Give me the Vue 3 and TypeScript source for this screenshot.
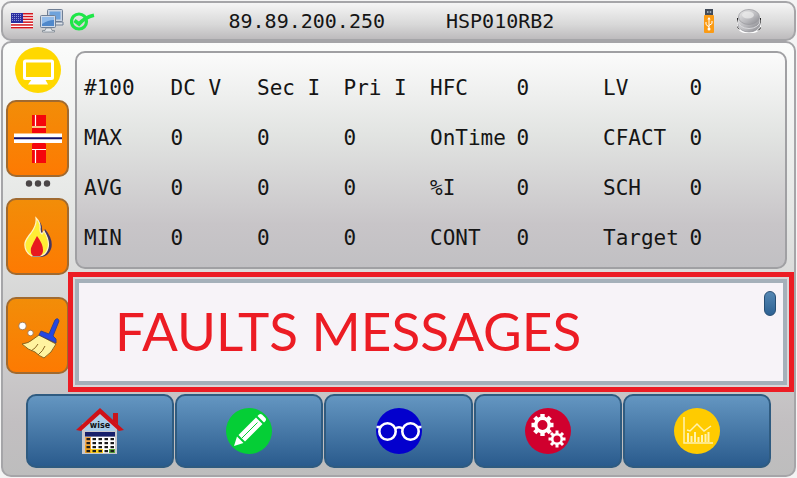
<script setup lang="ts">
interface StatRow {
  name: string
  cells: string[]
}

const address = '89.89.200.250'
const device = 'HSP010RB2'

const heading: string[] = ['#100', 'DC V', 'Sec I', 'Pri I', 'HFC', '0', 'LV', '0']
const rows: StatRow[] = [
  { name: 'MAX', cells: ['0', '0', '0', 'OnTime', '0', 'CFACT', '0'] },
  { name: 'AVG', cells: ['0', '0', '0', '%I', '0', 'SCH', '0'] },
  { name: 'MIN', cells: ['0', '0', '0', 'CONT', '0', 'Target', '0'] },
]

const stripes: number[] = [0, 1, 2, 3, 4, 5]
const calendarRows: number[] = [0, 1, 2, 3]
const calendarCols: number[] = [0, 1, 2, 3, 4]
const teeth: number[] = [0, 45, 90, 135, 180, 225, 270, 315]

function dayColor(row: number, col: number): string {
  if (col === 0) return row < 2 ? '#f5a94e' : '#f0a020'
  if (row === 3) return col === 4 ? '#5fae3c' : col < 3 ? '#ffd21c' : '#fff'
  return '#fff'
}
</script>

<template>
  <div class="screen">
    <header class="status">
      <div class="status-icons">
        <svg class="flag" viewBox="0 0 22 16" aria-label="English (US)">
          <rect width="22" height="16" fill="#fff" />
          <rect v-for="s in stripes" :key="s" x="0" :y="s * 2.8" width="22" height="1.5" fill="#d3151c" />
          <rect width="12" height="10" fill="#2b2fa0" />
          <path d="M1 1.5h10M1 3.5h10M1 5.5h10M1 7.5h10" stroke="#aab0e6" stroke-width=".8" stroke-dasharray="1 1" />
        </svg>
        <svg class="network" viewBox="0 0 25 24" aria-label="Network">
          <g stroke="#6f7f95" stroke-width="1">
            <rect x="8.500" y=".5" width="15" height="12" rx="1" fill="#c9d3e2" />
            <rect x="10.500" y="2.500" width="11" height="8" fill="#6fa3dc" stroke="none" />
            <path d="M13 16h11v-3h-9z" fill="#dfe3e8" />
            <rect x="1.500" y="6.500" width="15" height="12" rx="1" fill="#d2dbe8" />
          </g>
          <rect x="3" y="8" width="12" height="9" fill="#4f88cb" />
          <path d="M3 8h12v3Q9 11 3 15z" fill="#91bbea" />
          <path d="M7 19h5l1 2.500h2.500v1.500h-12v-1.500H6z" fill="#e3e6ea" stroke="#707b88" stroke-width=".7" />
        </svg>
        <svg class="check" viewBox="0 0 25 20" aria-label="Connected">
          <circle cx="9" cy="10.500" r="7.500" fill="none" stroke="#1fe648" stroke-width="3.200" />
          <path d="M4.500 9.500l4.500 3.500q6-7 15-8.800" fill="none" stroke="#1fe648" stroke-width="3.600" />
        </svg>
      </div>
      <span>{{ address }}</span>
      <span>{{ device }}</span>
      <div class="drives">
        <svg class="usb" viewBox="0 0 10 24" aria-label="USB drive">
          <rect x="1" width="8" height="7" fill="#414b59" />
          <path d="M3 2h1.500v2H3zM5.700 2h1.500v2H5.700z" fill="#9aa6b4" />
          <rect y="6" width="10" height="18" rx="1" fill="#fb9b14" />
          <path d="M5 20V9M5 18L2 15.500V13M5 16.500L8 14.500V12" fill="none" stroke="#fff" />
          <path d="M5 8l1.600 2.500H3.400z" fill="#fff" />
          <circle cx="5" cy="20" r="1.500" fill="#fff" />
        </svg>
        <svg class="disk" viewBox="0 0 24 24" aria-label="Storage">
          <defs>
            <linearGradient id="steel" x2="1" y2="1">
              <stop offset="0" stop-color="#eee" />
              <stop offset=".6" stop-color="#b7b7bb" />
              <stop offset="1" stop-color="#85858a" />
            </linearGradient>
          </defs>
          <path d="M0 9v9q2 5 7 6h10q5-1 7-6V9z" fill="#fff" />
          <path d="M0 9v5l2-5zM24 9v7l-2-7zM0 17l3 4q-2-1-3-3zM24 18l-4 4q3-1 4-3z" fill="#222" />
          <ellipse cx="12" cy="15.500" rx="11" ry="7.500" fill="url(#steel)" stroke="#919196" stroke-width=".7" />
          <ellipse cx="12" cy="12" rx="11" ry="7.500" fill="url(#steel)" stroke="#d9d9dc" stroke-width="1" />
          <ellipse cx="12" cy="8" rx="10.500" ry="7.500" fill="url(#steel)" stroke="#9b9ba0" stroke-width=".8" />
          <ellipse cx="11" cy="6" rx="6" ry="3.500" fill="#eee" opacity=".7" />
        </svg>
      </div>
    </header>

    <main class="panel">
      <div class="workspace">
        <aside class="tools">
          <button class="round" type="button" aria-label="Display">
            <svg viewBox="0 0 46 46">
              <circle cx="23" cy="23" r="23" fill="#ffd800" />
              <rect x="9.500" y="14" width="28" height="17.500" rx="1" fill="none" stroke="#fff" stroke-width="3" />
              <path d="M17 32h13l3 5.500H13z" fill="#fff" />
            </svg>
          </button>
          <button class="tool" type="button" aria-label="Weld">
            <svg viewBox="0 0 50 50">
              <path d="M19 1h14v11H19zM19 14h14v5H19zM19 30q2-3 7-3t7 3v5H19zM19 36h14v13H19z" fill="#f5060c" />
              <path d="M22.500 1v11M19 13h14M22.500 36v13M19 35.500h14" stroke="#fff" stroke-width="1.200" />
              <rect x="1" y="19.500" width="48" height="9.500" fill="#fff" />
              <path d="M1 24.300h48" stroke="#10106a" stroke-width="2" />
            </svg>
          </button>
          <svg class="dots" viewBox="0 0 26 21" aria-hidden="true">
            <g fill="#4b4647">
              <circle cx="4" cy="6.500" r="3.200" />
              <circle cx="13" cy="6.500" r="3.200" />
              <circle cx="22" cy="6.500" r="3.200" />
            </g>
          </svg>
          <button class="tool" type="button" aria-label="Heat">
            <svg viewBox="0 0 50 50">
              <path d="M24 7q5 4 5 9 0 4 1 5l2-4q9 11 6 20-3 8-11 8h-8z" fill="#453660" />
              <path d="M23 6q5 5 4 11 0 4 2 5l2-3q6 10 4 17-2 7-8 8H19q-8-4-7-13 1-4 6-10 6-8 5-15z" fill="#ffed35" stroke="#fff3c5" stroke-width="1.200" />
              <path d="M24 24q6 8 6 14 0 4-3 6h-7q-3-3-2-8 2-5 6-12z" fill="#e8191f" />
            </svg>
          </button>
          <button class="tool spaced" type="button" aria-label="Clear">
            <svg viewBox="0 0 50 50">
              <g fill="#fff" stroke="#966d4b" stroke-width=".8">
                <circle cx="9.500" cy="15" r="3.800" />
                <circle cx="17.500" cy="22" r="2.800" />
              </g>
              <path d="M26 24l17 9q-4 9-12 14-5-2-9-6-7-2-13-8 7-1 10-4z" fill="#fff3a0" stroke="#8a6520" />
              <path d="M18 40q5-3 7-7M25 44q5-4 7-9" fill="none" stroke="#8a6520" />
              <path d="M36 23l6-14q3-3 4 1l-6 15 3 3v4L26 24l2-4z" fill="#2446e4" stroke="#394388" />
            </svg>
          </button>
        </aside>

        <div class="content">
          <section class="stats">
            <table>
              <thead>
                <tr>
                  <th v-for="(label, i) in heading" :key="i" scope="col">{{ label }}</th>
                </tr>
              </thead>
              <tbody>
                <tr v-for="row in rows" :key="row.name">
                  <th scope="row">{{ row.name }}</th>
                  <td v-for="(cell, i) in row.cells" :key="i">{{ cell }}</td>
                </tr>
              </tbody>
            </table>
          </section>

          <section class="callout">
            <div class="messages">
              <p>FAULTS MESSAGES</p>
              <span class="thumb"></span>
            </div>
          </section>
        </div>
      </div>

      <nav class="menu">
        <button type="button" aria-label="Home">
          <svg viewBox="0 0 48 48">
            <path d="M37 6h5v14l-5-5z" fill="#c8141b" />
            <path d="M6 17L24 4l17 13v30H6z" fill="#c8c8cc" />
            <path d="M9 20L24 8l15 13v3H9z" fill="#a9cdea" />
            <path d="M0 23L24 1l24 22-5 1L24 7 5 24z" fill="#cf1118" />
            <text x="24" y="21" text-anchor="middle" class="brand">wise</text>
            <rect x="9" y="25" width="30" height="4.500" fill="#17206b" />
            <g v-for="r in calendarRows" :key="r">
              <g v-for="c in calendarCols" :key="c">
                <rect :x="9 + c * 6" :y="30 + r * 4" width="6" height="4" :fill="dayColor(r, c)" />
                <rect :x="10.5 + c * 6" :y="31 + r * 4" width="3.500" height="2.200" fill="#1b1b1b" />
              </g>
            </g>
          </svg>
        </button>
        <button type="button" aria-label="Edit">
          <svg viewBox="0 0 48 48">
            <circle cx="24" cy="24" r="23" fill="#05ce36" />
            <path d="M9 39l3-9.500 6.500 6.500zM13.500 28L31 10.500l6.500 6.500L20 34.500zM32.500 9l1.500-1.500q1.500-1 3 0l3.500 3.500q1 1.500 0 3L39 15.500z" fill="#fff" />
            <path d="M17 31l15.500-15.500" stroke="#05ce36" stroke-width="1" />
          </svg>
        </button>
        <button type="button" aria-label="View">
          <svg viewBox="0 0 48 48">
            <circle cx="24" cy="24" r="23" fill="#0300cd" />
            <g fill="none" stroke="#fff" stroke-width="2.600">
              <circle cx="12.500" cy="24.500" r="8.200" />
              <circle cx="35.500" cy="24.500" r="8.200" />
              <path d="M20 22q4-3.500 8 0M1.500 20H6M42 20h4.500" />
            </g>
          </svg>
        </button>
        <button type="button" aria-label="Settings">
          <svg viewBox="0 0 48 48">
            <circle cx="24" cy="24" r="23" fill="#d0002e" />
            <g fill="#fff">
              <rect v-for="a in teeth" :key="a" x="16.300" y="7" width="4.400" height="5" :transform="`rotate(${a} 18.5 18)`" />
              <rect v-for="a in teeth" :key="'s' + a" x="31.500" y="23.500" width="3" height="4" :transform="`rotate(${a} 33 32)`" />
            </g>
            <g fill="none" stroke="#fff">
              <circle cx="18.500" cy="18" r="6.700" stroke-width="3.400" />
              <circle cx="33" cy="32" r="4.800" stroke-width="2.600" />
            </g>
          </svg>
        </button>
        <button type="button" aria-label="Charts">
          <svg viewBox="0 0 48 48">
            <circle cx="24" cy="24" r="23" fill="#ffcb00" />
            <path d="M11 10v26h29" fill="none" stroke="#fff2b0" stroke-width="1.500" />
            <path d="M14 23l3 1 7-7 7 7 7-5" fill="none" stroke="#fff2b0" stroke-width="1.500" />
            <path d="M15 35v-9M18.500 35v-6M22 35V25M25.500 35v-5M29 35v-7M32.500 35v-8M35.500 35V25" stroke="#fff2b0" stroke-width="2" />
          </svg>
        </button>
      </nav>
    </main>
  </div>
</template>

<style>
body {
  margin: 0;
  background: #f4f4f4;
}
</style>

<style scoped>
.screen {
  box-sizing: border-box;
  display: flex;
  flex-direction: column;
  min-height: 100vh;
  padding: 1px;
  color: #151515;
  font-family: "DejaVu Sans Mono", monospace;
}

svg {
  display: block;
}

button {
  box-sizing: border-box;
  display: flex;
  align-items: center;
  justify-content: center;
  padding: 0;
  border: 0;
  background: none;
  cursor: pointer;
}

.status {
  box-sizing: border-box;
  display: grid;
  grid-template-columns: 29% 29% 1fr auto;
  align-items: center;
  height: 40px;
  padding: 0 33px 1px 8px;
  border: 2px solid #a5a5a8;
  border-radius: 10px;
  background: linear-gradient(#f5f5f5, #d8d8d8 60%, #bdbbbd);
  font-size: 20px;
  line-height: 24px;
}

.status-icons,
.drives {
  display: flex;
  align-items: center;
}

.status-icons {
  gap: 6px;
}

.drives {
  gap: 23px;
}

.flag {
  width: 22px;
  height: 16px;
}

.network {
  width: 25px;
  height: 24px;
}

.check {
  width: 25px;
  height: 20px;
}

.usb {
  width: 10px;
  height: 24px;
}

.disk {
  width: 24px;
  height: 24px;
}

.panel {
  flex: 1;
  display: flex;
  flex-direction: column;
  gap: 2px;
  padding: 4px 0 7px;
  border: 2px solid #a5a5a8;
  border-radius: 10px;
  background: linear-gradient(#fbfcfb, #e4e6e4 40%, #c2bfc1 88%, #bdbdbd);
}

.workspace {
  flex: 1;
  display: flex;
  gap: 6px;
  padding: 0 7px 0 3px;
}

.tools {
  display: flex;
  flex-direction: column;
  align-items: center;
  width: 63px;
}

.round {
  margin-bottom: 7px;
  border-radius: 50%;
}

.round svg {
  width: 46px;
  height: 46px;
}

.tool {
  width: 100%;
  height: 77px;
  border: 2px solid #a06a30;
  border-radius: 10px;
  background: linear-gradient(#f28d08, #fd7a02);
}

.tool svg {
  width: 50px;
  height: 50px;
}

.spaced {
  margin-top: 22px;
}

.dots {
  width: 26px;
  height: 21px;
}

.content {
  flex: 1;
  display: flex;
  flex-direction: column;
  gap: 3px;
  padding-top: 4px;
}

.stats {
  flex: 1;
  display: flex;
  align-items: center;
  padding: 6px 9px 0 7px;
  border: 2px solid #a0a0a3;
  border-radius: 10px;
  background: linear-gradient(#fbfbfb, #e2e4e2 38%, #c8c5c8 80%, #c1c0c3);
}

table {
  width: 100%;
  table-layout: fixed;
  border-collapse: collapse;
  font-size: 21px;
}

th,
td {
  height: 50px;
  padding: 0;
  font-weight: normal;
  line-height: 24px;
  text-align: left;
  white-space: nowrap;
}

.callout {
  position: relative;
  margin: 0 -7px;
  padding: 2px;
  border: 5px solid #ec1c24;
  background: #d9d6d8;
}

.messages {
  display: flex;
  align-items: flex-start;
  justify-content: space-between;
  padding: 8px 7px 8px 36px;
  border: 4px solid #a5b0ba;
  background: #f7f3f8;
}

.messages p {
  margin: 8px 0 10px;
  color: #ec1c24;
  font-family: Lato, "Liberation Sans", sans-serif;
  font-size: 53px;
  line-height: 64px;
  white-space: nowrap;
}

.thumb {
  box-sizing: border-box;
  width: 12px;
  height: 25px;
  border: 1px solid #274e74;
  border-radius: 6px;
  background: linear-gradient(#5587b3, #2d6193);
}

.menu {
  display: flex;
  gap: 1px;
  padding: 0 23px;
}

.menu button {
  flex: 1;
  height: 74px;
  border: 2px solid #2f5b80;
  border-radius: 10px;
  background: linear-gradient(#6496c1, #2a5b8d);
}

.menu svg {
  width: 48px;
  height: 48px;
}

.brand {
  fill: #111;
  font-family: "DejaVu Sans", sans-serif;
  font-size: 8px;
  font-weight: bold;
}
</style>
